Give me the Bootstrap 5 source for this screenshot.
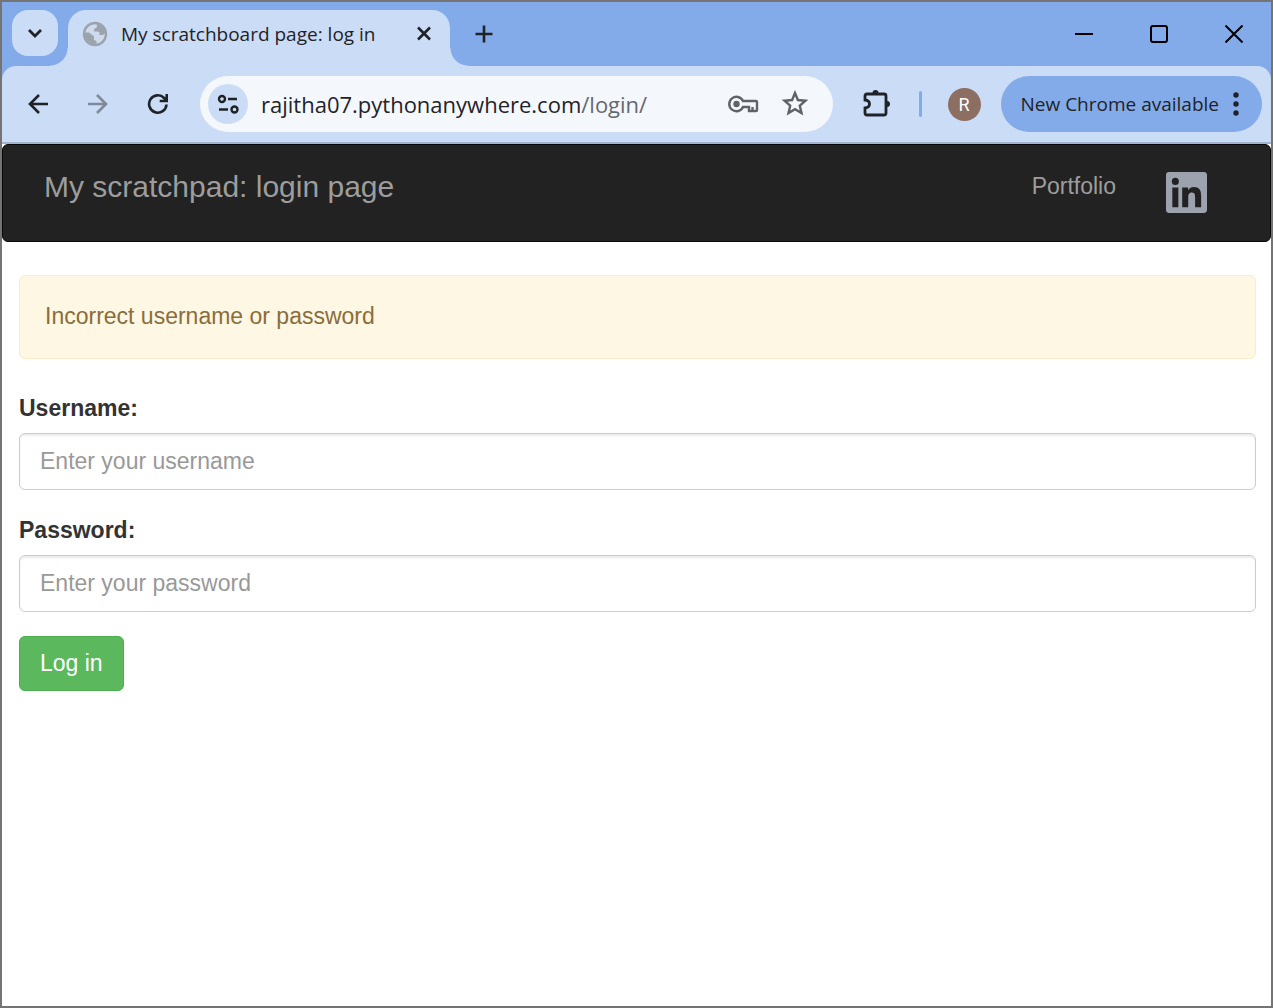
<!DOCTYPE html>
<html lang="en">
<head>
<meta charset="utf-8">
<meta name="viewport" content="width=device-width, initial-scale=1">
<title>My scratchboard page: log in</title>
<link href="https://cdn.jsdelivr.net/npm/bootstrap@5.3.0/dist/css/bootstrap.min.css" rel="stylesheet">
<style>
  :root { --frame: #84abe9; --bar: #cbdcf6; --ink: #1f2328; }
  body { font-family: "Liberation Sans", Arial, sans-serif; font-size: 23px; line-height: 33px; color: #333; }
  .browser { border: 2px solid #747474; }
  .chrome-ui { font-family: "Open Sans", "Noto Sans", sans-serif; color: var(--ink); background: var(--frame); }
  .plain-btn { border: 0; background: none; padding: 0; color: inherit; display: inline-flex; align-items: center; justify-content: center; flex: none; }
  svg { display: block; flex: none; }

  .tabstrip { height: 64px; padding: 8px 0 0 10px; }
  .tab-search { width: 46px; height: 46px; border-radius: 16px; background: var(--bar); margin-right: 10px; }
  .browser-tab { position: relative; width: 382px; height: 56px; padding: 0 14px; border-radius: 18px 18px 0 0; background: var(--bar); font-size: 19px; line-height: 48px; }
  .browser-tab::before, .browser-tab::after { content: ""; position: absolute; bottom: 0; width: 18px; height: 18px; }
  .browser-tab::before { right: 100%; background: radial-gradient(circle at 0 0, transparent 17px, var(--bar) 18px); }
  .browser-tab::after { left: 100%; background: radial-gradient(circle at 100% 0, transparent 17px, var(--bar) 18px); }
  .tab-icons { height: 48px; }
  .tab-title { margin-left: 13px; }
  .new-tab { width: 48px; height: 48px; margin-left: 10px; }
  .win-btn { width: 75px; height: 48px; color: #000; }

  .toolbar { padding: 10px 9px 10px 12px; border-bottom: 2px solid #a4b4cf; border-radius: 14px 14px 0 0; background: var(--bar); }
  .tool-btn { width: 48px; height: 48px; }
  .omnibox { height: 56px; margin: 0 20px 0 18px; padding: 0 20px 0 8px; border-radius: 28px; background: #f4f8fd; font-size: 22px; line-height: 32px; }
  .site-info { width: 40px; height: 40px; border-radius: 50%; background: var(--bar); }
  .address { margin-left: 13px; outline: 0; }
  .address-path { color: #65696e; }
  .omni-btn { width: 36px; height: 40px; color: #606366; }
  .split-line { width: 3px; height: 26px; border-radius: 2px; background: var(--frame); margin: 0 26px 0 18px; }
  .avatar { width: 33px; height: 33px; margin-right: 20px; border-radius: 50%; background: #8d6e63; color: #fff; font-family: Roboto, sans-serif; font-size: 18px; }
  .update-pill { height: 56px; padding: 0 23px 0 20px; gap: 14px; border-radius: 28px; background: var(--frame); font-size: 19px; }

  .site-nav { min-height: 98px; padding: 24px 63px 24px 41px; border: 1px solid #080808; border-radius: 6px; background: #222; }
  .site-nav a { color: #9d9d9d; line-height: 34px; text-decoration: none; }
  .site-nav .navbar-brand { font-size: 30px; line-height: 36px; }
  .site-nav .social { color: #9ca3af; padding-top: 3px; }
  .nav-links { gap: 50px; }

  .login-page { min-height: 764px; padding: 33px 15px 0 17px; }
  .login-page .alert { padding: 24px 25px 25px; margin-bottom: 33px; border-color: #faebcc; border-radius: 6px; background: #fef7e3; color: #8a6d3b; }
  .login-page .form-label { margin-bottom: 8px; font-weight: 700; display: block; }
  .login-page .form-control { height: 57px; padding: 0 20px; margin-bottom: 24px; border: 1px solid #ccc; border-radius: 6px; font-size: 23px; box-shadow: inset 0 2px 2px rgba(0,0,0,.075); }
  .login-page .form-control::placeholder { color: #999; }
  .login-page .btn-success { padding: 10px 20px; border-color: #4cae4c; border-radius: 6px; background: #5cb85c; font-size: 23px; line-height: 33px; }
</style>
<script src="https://cdn.jsdelivr.net/npm/bootstrap@5.3.0/dist/js/bootstrap.bundle.min.js"></script>
</head>
<body>
<div class="browser min-vh-100">
  <header class="chrome-ui">
    <div class="tabstrip d-flex align-items-start">
      <button class="plain-btn tab-search" type="button" aria-label="Search tabs">
        <svg width="16" height="10" viewBox="0 0 16 10" fill="none" stroke="currentColor" stroke-width="2.8"><path d="M2 2l6 6 6-6"/></svg>
      </button>
      <div class="browser-tab">
        <div class="tab-icons d-flex align-items-center">
          <svg width="26" height="26" viewBox="0 0 26 26"><circle cx="13" cy="13" r="11" fill="#cfdbec" stroke="#9ba3ad" stroke-width="2.4"/><path fill="#9ba3ad" d="M12 2.500l3 .300v2.200q0 2-2 2.500l-1 .500v2.500h3.500q2 0 2 2v1.500h2.500q2.500 0 3-2l.500-2-1.500-4-4-4zM2 11.500h5l5 4v3.500l2.500 1v3.500l-3.500-.300-5-3-3-4z"/></svg>
          <span class="tab-title text-nowrap">My scratchboard page: log in</span>
          <button class="plain-btn ms-auto" type="button" aria-label="Close tab">
            <svg width="24" height="24" viewBox="0 0 24 24" stroke="currentColor" stroke-width="2.600"><path d="M6 5.500l12 12M18 5.500l-12 12"/></svg>
          </button>
        </div>
      </div>
      <button class="plain-btn new-tab" type="button" aria-label="New tab">
        <svg width="18" height="18" viewBox="0 0 18 18" stroke="currentColor" stroke-width="2.600"><path d="M9 .500v17M.500 9h17"/></svg>
      </button>
      <div class="d-flex ms-auto">
        <button class="plain-btn win-btn" type="button" aria-label="Minimize"><svg width="18" height="18" viewBox="0 0 18 18" stroke="currentColor" stroke-width="2"><path d="M0 9h18"/></svg></button>
        <button class="plain-btn win-btn" type="button" aria-label="Maximize"><svg width="18" height="18" viewBox="0 0 18 18" fill="none" stroke="currentColor" stroke-width="2"><rect x="1" y="1" width="16" height="16" rx="2"/></svg></button>
        <button class="plain-btn win-btn" type="button" aria-label="Close"><svg width="18" height="18" viewBox="0 0 18 18" stroke="currentColor" stroke-width="2"><path d="M.500 .500l17 17M17.500 .500l-17 17"/></svg></button>
      </div>
    </div>
    <div class="toolbar d-flex align-items-center">
      <div class="d-flex gap-2">
        <button class="plain-btn tool-btn me-1" type="button" aria-label="Back"><svg width="20" height="20" viewBox="0 0 20 20" fill="none" stroke="currentColor" stroke-width="2.600"><path d="M20 10H2M11 1l-9 9 9 9"/></svg></button>
        <button class="plain-btn tool-btn me-1" type="button" aria-label="Forward"><svg width="20" height="20" viewBox="0 0 20 20" fill="none" stroke="#7f8998" stroke-width="2.600"><path d="M0 10h18M9 1l9 9-9 9"/></svg></button>
        <button class="plain-btn tool-btn" type="button" aria-label="Reload"><svg width="22" height="22" viewBox="0 0 22 22" fill="none" stroke="currentColor" stroke-width="2.600"><path d="M19.500 11.500a8.700 8.700 0 1 1-2.400-6.500L19 7M19.700 1v7h-7"/></svg></button>
      </div>
      <div class="omnibox d-flex align-items-center flex-grow-1">
        <button class="plain-btn site-info" type="button" aria-label="View site information"><svg width="22" height="20" viewBox="0 0 22 20" fill="none" stroke="currentColor" stroke-width="2.400"><circle cx="5" cy="5" r="3"/><path d="M11 5h9M2 15.500h9"/><circle cx="17.500" cy="15.500" r="3"/></svg></button>
        <div class="address text-nowrap flex-grow-1" role="textbox" aria-label="Address bar" contenteditable="true" spellcheck="false">rajitha07.pythonanywhere.com<span class="address-path">/login/</span></div>
        <div class="d-flex gap-3">
          <button class="plain-btn omni-btn" type="button" aria-label="Passwords"><svg width="32" height="20" viewBox="0 0 32 20" fill="none" stroke="currentColor" stroke-width="2.400"><path d="M16 7a7.200 7.200 0 1 0 0 6h6v4h7q1 0 1-1V8q0-1-1-1zM25.500 17v-4"/><circle cx="9.500" cy="10" r="3.200" fill="currentColor" stroke="none"/></svg></button>
          <button class="plain-btn omni-btn" type="button" aria-label="Bookmark this tab"><svg width="28" height="28" viewBox="0 0 28 28" fill="none" stroke="currentColor" stroke-width="2.400"><path d="M14 3l2.900 7 7.600.700-5.700 5 1.700 7.400L14 19.200l-6.500 3.900 1.700-7.400-5.700-5 7.600-.700z"/></svg></button>
        </div>
      </div>
      <button class="plain-btn tool-btn" type="button" aria-label="Extensions"><svg width="28" height="30" viewBox="0 0 28 30" fill="none" stroke="currentColor" stroke-width="2.800"><path d="M4 5h17q2 0 2 2v17q0 2-2 2H4q-2 0-2-2v-5q4.500-.500 4.500-4T2 11V7q0-2 2-2z"/><path fill="currentColor" stroke="none" d="M9.500 4a3 3 0 0 1 6 0zM24 12a3 3 0 0 1 0 6z"/></svg></button>
      <div class="split-line"></div>
      <button class="plain-btn avatar" type="button" aria-label="Profile">R</button>
      <button class="plain-btn update-pill text-nowrap" type="button">New Chrome available
        <svg width="6" height="24" viewBox="0 0 6 24" fill="currentColor"><circle cx="3" cy="3" r="2.700"/><circle cx="3" cy="12" r="2.700"/><circle cx="3" cy="21" r="2.700"/></svg>
      </button>
    </div>
  </header>

  <nav class="site-nav d-flex align-items-start">
    <a class="navbar-brand p-0 m-0" href="#">My scratchpad: login page</a>
    <div class="nav-links d-flex ms-auto">
      <a href="#">Portfolio</a>
      <a class="social" href="#" aria-label="LinkedIn"><svg width="41" height="41" viewBox="0 0 448 448" fill="currentColor"><path fill-rule="evenodd" d="M416 0H32C14 0 0 14 0 32v384c0 18 14 32 32 32h384c18 0 32-14 32-32V32c0-18-14-32-32-32zM135 384H69V170h66zM102 141a38 38 0 1 1 0-77 38 38 0 0 1 0 77zM384 384h-66V280c0-25 0-57-35-57s-40 27-40 55v106h-66V170h64v29h1c9-17 31-35 63-35 67 0 79 44 79 102z"/></svg></a>
    </div>
  </nav>

  <main class="login-page">
    <div class="alert" role="alert">Incorrect username or password</div>
    <form>
      <label class="form-label" for="username">Username:</label>
      <input class="form-control" type="text" id="username" placeholder="Enter your username">
      <label class="form-label" for="password">Password:</label>
      <input class="form-control" type="password" id="password" placeholder="Enter your password">
      <button class="btn btn-success" type="submit">Log in</button>
    </form>
  </main>
</div>
</body>
</html>
